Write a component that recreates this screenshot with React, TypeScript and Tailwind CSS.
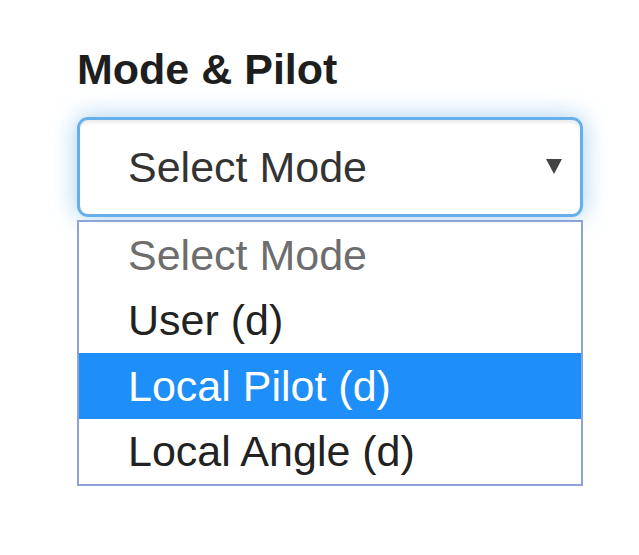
import React from 'react';

const options = [
  { label: 'Select Mode', muted: true },
  { label: 'User (d)' },
  { label: 'Local Pilot (d)', active: true },
  { label: 'Local Angle (d)' },
];

const App: React.FC = () => {
  return (
    <div className="min-h-[555px] w-[639px] bg-white pl-[77px] pt-[48px] font-[family-name:'Liberation_Sans',Arial,sans-serif]">
      <div className="w-[506px]">
        <label className="mb-[27px] block text-[43px] leading-[42px] font-bold text-[#1e1e1e]">Mode &amp; Pilot</label>

        <div className="flex h-[100px] items-center justify-between rounded-[11px] border-[3px] border-[#66afe9] pl-[48px] pr-[17px] shadow-[inset_0_3px_3px_rgba(0,0,0,0.075),0_0_24px_rgba(102,175,233,0.6)]">
          <span className="text-[43px] leading-[42px] text-[#333]">Select Mode</span>
          <svg width="18" height="17" viewBox="0 0 18 17" className="mt-[-1px]">
            <polygon points="1,1 17,1 9,16" fill="#444" />
          </svg>
        </div>

        <ul className="mt-[3px] border-[2px] border-[#8da2d6] bg-white">
          {options.map((o) => (
            <li
              key={o.label}
              className={
                'flex h-[65.5px] items-center pl-[49px] text-[43px] leading-[42px] ' +
                (o.active ? 'bg-[#1e8ef9] text-white' : o.muted ? 'text-[#6d6d6d]' : 'text-[#222]')
              }
            >
              {o.label}
            </li>
          ))}
        </ul>
      </div>
    </div>
  );
};

export default App;
